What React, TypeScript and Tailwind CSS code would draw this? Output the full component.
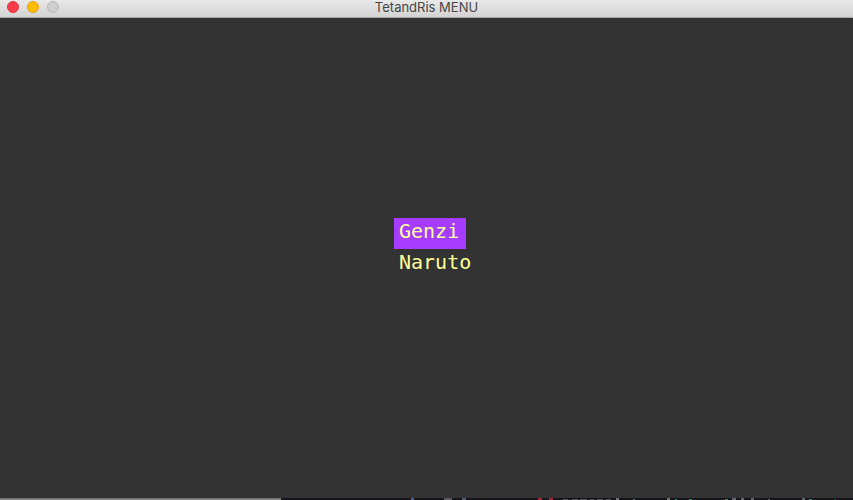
const items = ["Genzi", "Naruto"];

const fragments: [number, number, number, string][] = [
  [412, 0, 2, "#4a6296"], [414, 0, 1, "#8a5a48"], [445, 0, 8, "#5a5963"],
  [463, 0, 4, "#4c5b78"], [539, 0, 4, "#a5242e"], [550, 0, 4, "#a5242e"],
  [564, 1, 5, "#55545f"], [573, 1, 6, "#55545f"],
  [581, 1, 7, "#55545f"], [591, 1, 4, "#55545f"], [598, 1, 6, "#55545f"],
  [607, 1, 5, "#55545f"], [617, 0, 3, "#74737b"], [634, 1, 2, "#6a7184"],
  [668, 0, 3, "#74737b"], [676, 1, 2, "#3a8751"], [690, 1, 3, "#3a8751"],
  [726, 1, 3, "#3a8751"], [733, 0, 4, "#65646e"], [742, 0, 3, "#65646e"],
  [752, 0, 3, "#65646e"], [769, 1, 2, "#65646e"], [803, 0, 3, "#65646e"],
  [810, 1, 3, "#3a8751"], [835, 1, 2, "#234d31"],
];

export default function App() {
  return (
    <div className="flex h-screen flex-col overflow-hidden bg-[#333333]">
      <header className="grid h-[18px] shrink-0 grid-cols-[1fr_auto_1fr] items-center border-b border-[#a9a9a9] bg-linear-to-b from-[#e9e9e9] to-[#d3d3d3] pb-[3px]">
        <div className="flex gap-2 pl-[7px]">
          <button aria-label="Close" className="size-3 rounded-full border border-[#e0353f] bg-[#fc3b48]" />
          <button aria-label="Minimize" className="size-3 rounded-full border border-[#e0a310] bg-[#fdbc04]" />
          <button aria-label="Zoom" disabled className="size-3 rounded-full border border-[#b9b9b9] bg-[#cecece]" />
        </div>
        <h1 className="font-['Inter',sans-serif] text-[13px] leading-[14px] text-[#464646]">TetandRis MENU</h1>
      </header>
      <main className="flex flex-1 items-center justify-center pb-[18px] pl-[7px]">
        <nav className="flex w-[72px] flex-col font-['DejaVu_Sans_Mono',monospace] text-[20px] leading-[27px] text-[#ffff99]">
          {items.map((item, i) => (
            <button
              key={item}
              className={`h-[31px] pb-1 pl-[5px] text-left whitespace-nowrap ${i === 0 ? "bg-[#a63cff]" : ""}`}
            >
              {item}
            </button>
          ))}
        </nav>
      </main>
      <footer className="flex h-[2px] shrink-0">
        <div className="w-[33%] bg-linear-to-b from-[#666666] to-[#909090]" />
        <div className="flex-1 overflow-hidden bg-[#15131c]">
          <svg width="571" height="2" viewBox="282 0 571 2" shapeRendering="crispEdges" aria-hidden="true">
            {fragments.map(([x, y, w, color]) => (
              <rect key={x} x={x} y={y} width={w} height={2 - y} fill={color} />
            ))}
          </svg>
        </div>
      </footer>
    </div>
  );
}
